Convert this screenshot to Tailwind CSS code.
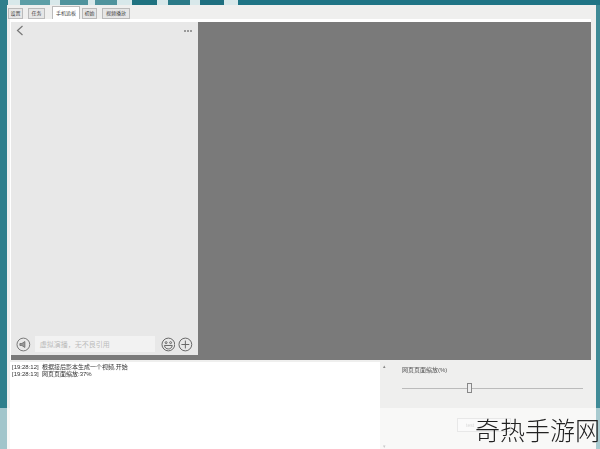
<!DOCTYPE html>
<html lang="zh">
<head>
    <meta charset="UTF-8">
    <title>手机追板</title>
    <script src="https://cdn.jsdelivr.net/npm/@tailwindcss/browser@4"></script>
</head>
<body class="bg-[#3f8a96] font-['Liberation_Sans','Noto_Sans_CJK_SC',sans-serif]">
    <div class="relative w-[600px] h-[449px] overflow-hidden">
        <div class="blur-[0.4px]">
            <!-- top band -->
            <div class="flex h-[5px] bg-[#d8e8ea]">
                <div class="w-[8px] bg-[#2f7f8c]"></div>
                <div class="w-[30px] ml-[12px] bg-[#5d9ea6]"></div>
                <div class="w-[28px] ml-[10px] bg-[#4f939d]"></div>
                <div class="w-[22px] ml-[7px] bg-[#4f939d]"></div>
                <div class="w-[25px] ml-[15px] bg-[#1f7280]"></div>
                <div class="w-[22px] ml-[11px] bg-[#2b7a88]"></div>
                <div class="w-[24px] ml-[10px] bg-[#1f6f80]"></div>
                <div class="flex-1 ml-[14px] bg-[#1f7485]"></div>
            </div>

            <div class="flex h-[444px]">
                <div class="w-[7px] bg-[#2f7f8c]"></div>
                <!-- window -->
                <div class="w-[589px] bg-[#efefee] pl-[3px] pr-[5px]">
                    <div class="flex items-end h-[14px] -ml-[2px] text-[5px] text-[#444] leading-none">
                        <div class="flex items-center justify-center w-[15px] h-[11px] bg-[#e6e6e6] border border-[#bbb]">设置</div>
                        <div class="flex items-center justify-center w-[17px] h-[11px] ml-[5px] bg-[#e6e6e6] border border-[#bbb]">任务</div>
                        <div class="flex items-center justify-center w-[28px] h-[13px] ml-[7px] bg-white border border-b-0 border-[#bbb]">手机追板</div>
                        <div class="flex items-center justify-center w-[15px] h-[11px] ml-[2px] bg-[#e6e6e6] border border-[#bbb]">初始</div>
                        <div class="flex items-center justify-center w-[28px] h-[11px] ml-[5px] bg-[#e6e6e6] border border-[#bbb]">视频播放</div>
                    </div>
                    <div class="h-[2px] bg-white"></div>

                    <!-- main area -->
                    <div class="h-[339px] bg-[#7a7a7a] border-t border-l border-white pb-[5px]">
                        <div class="flex flex-col w-[187px] h-full bg-[#e8e8e8]">
                            <div class="flex justify-between items-center h-[17px] pl-[5px] pr-[6px]">
                                <svg width="8" height="11" viewBox="0 0 8 11" fill="none" stroke="#777" stroke-width="1.2"><path d="M6.5 1 L1.5 5.5 L6.5 10"/></svg>
                                <span class="flex gap-[1px]">
                                    <i class="w-[2px] h-[2px] bg-[#999]"></i>
                                    <i class="w-[2px] h-[2px] bg-[#999]"></i>
                                    <i class="w-[2px] h-[2px] bg-[#999]"></i>
                                </span>
                            </div>
                            <div class="flex-1"></div>
                            <div class="flex items-center h-[22px] pl-[5px] pr-[5px]">
                                <svg width="15" height="15" viewBox="0 0 15 15" fill="none" stroke="#777"><circle cx="7.5" cy="7.5" r="6.5"/><path d="M4 6.5h2l3-2v6l-3-2H4z" fill="#999"/></svg>
                                <div class="flex items-center w-[122px] h-[16px] ml-[4px] pl-[5px] bg-[#f2f2f2] text-[7px] text-[#bbb] leading-none">虚拟演播，无不良引用</div>
                                <svg class="ml-[6px]" width="15" height="15" viewBox="0 0 15 15" fill="none" stroke="#666"><circle cx="7.5" cy="7.5" r="6.5"/><path d="M3.5 8.5h8c-.5 2.5-2 3.5-4 3.5s-3.5-1-4-3.5z"/><circle cx="5.2" cy="5.6" r="1"/><circle cx="9.8" cy="5.6" r="1"/></svg>
                                <svg class="ml-[3px]" width="15" height="15" viewBox="0 0 15 15" fill="none" stroke="#666"><circle cx="7.5" cy="7.5" r="6.5"/><path d="M7.5 3.5v8M3.5 7.5h8"/></svg>
                            </div>
                        </div>
                    </div>

                    <!-- bottom area -->
                    <div class="flex h-[89px] mt-[2px]">
                        <div class="w-[370px] bg-white pl-[2px] pt-[2px] text-[6px] leading-[7px] text-[#333]">
                            <p>[19:28:12]&nbsp; 根据接后影本生成一个视频,开始</p>
                            <p>[19:28:13]&nbsp; 网页页面缩放:37%</p>
                        </div>
                        <div class="flex flex-col justify-between items-center w-[9px] py-[2px] text-[5px] text-[#888] leading-none">
                            <span>▴</span>
                            <span>▾</span>
                        </div>
                        <div class="flex-1 pl-[13px] pt-[4px]">
                            <p class="text-[6px] leading-[8px] text-[#555]">网页页面缩放(%)</p>
                            <div class="relative h-[1px] w-[181px] mt-[14px] bg-[#bbb]">
                                <div class="absolute left-[65px] top-[-5px] w-[5px] h-[10px] bg-[#eee] border border-[#888]"></div>
                            </div>
                            <div class="flex items-center w-[54px] h-[14px] ml-[55px] mt-[29px] pl-[8px] bg-[#f4f4f4] border border-[#ccc] text-[5px] text-[#aaa] leading-none">test</div>
                        </div>
                    </div>
                </div>
                <div class="flex-1 bg-[#3f8a96]"></div>
            </div>
        </div>

        <!-- lighter fade over the bottom edge -->
        <div class="absolute left-0 right-0 bottom-0 h-[41px] bg-white/55"></div>
        <!-- watermark -->
        <div class="absolute right-0 top-[417px] text-[25px] leading-[28px] font-light text-[#222] whitespace-nowrap">奇热手游网</div>
    </div>
</body>
</html>
